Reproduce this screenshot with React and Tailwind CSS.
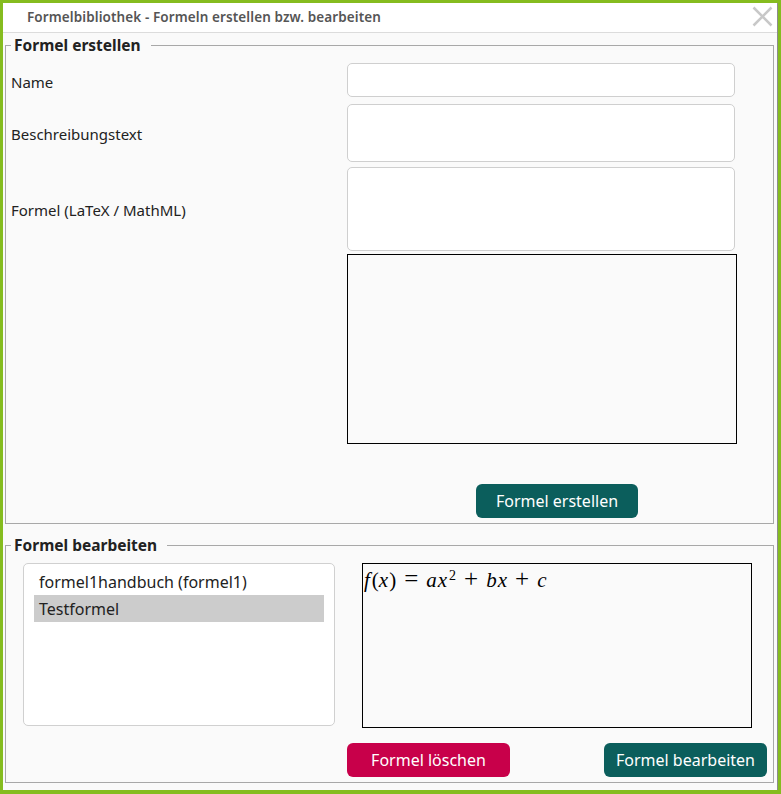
export default function App() {
  const font = { fontFamily: '"Noto Sans", "Open Sans", sans-serif' }
  const serif = { fontFamily: '"Liberation Serif", "DejaVu Serif", serif' }

  return (
    <div className="w-[781px] h-[794px] border-l-[3px] border-t-[3px] border-r-[3px] border-b-[4px] border-[#85bc1f] bg-[#fafafa] flex flex-col overflow-hidden" style={font}>
      <div className="flex-1 flex flex-col border-r border-[#8c8c8c]">
        {/* Titelleiste */}
        <div className="h-[30px] bg-white border-b border-[#dcdcdc] flex items-center justify-between pl-[24px] pr-[4px]">
          <span className="text-[13.5px] font-semibold text-[#555] tracking-[0.1px]">Formelbibliothek - Formeln erstellen bzw. bearbeiten</span>
          <svg width="21" height="21" viewBox="0 0 21 21" className="-mt-[3px]">
            <path d="M1.5 1.5 L19.5 19.5 M19.5 1.5 L1.5 19.5" stroke="#c8c8c8" strokeWidth="2.5" />
          </svg>
        </div>

        {/* Formel erstellen */}
        <fieldset className="mt-[2px] ml-[2px] mr-[3px] border border-[#a8a8a8] px-[5px] pb-[5px]">
          <legend className="text-[15.5px] leading-[20px] font-bold text-[#222] pl-[3px] pr-[10px]">Formel erstellen</legend>
          <div className="pt-[8px] grid grid-cols-[336px_1fr] text-[15px] text-[#222]">
            <label className="flex items-center h-[34px] pt-[5px]">Name</label>
            <input className="w-[388px] h-[34px] bg-white border border-[#cfcfcf] rounded-[5px] outline-none px-2" />

            <label className="flex items-center h-[58px] mt-[7px] pt-[2px]">Beschreibungstext</label>
            <textarea className="w-[388px] h-[58px] mt-[7px] bg-white border border-[#cfcfcf] rounded-[5px] outline-none resize-none px-2" />

            <label className="flex items-center h-[84px] mt-[5px] pt-[2px]">Formel (LaTeX / MathML)</label>
            <textarea className="w-[388px] h-[84px] mt-[5px] bg-white border border-[#cfcfcf] rounded-[5px] outline-none resize-none px-2" />

            <div />
            <div className="w-[390px] h-[190px] mt-[3px] border border-black bg-[#fafafa]" />

            <div />
            <div className="mt-[40px] pl-[129px]">
              <button className="w-[162px] h-[34px] rounded-[6px] bg-[#0b5e5c] text-white text-[16px]">Formel erstellen</button>
            </div>
          </div>
        </fieldset>

        {/* Formel bearbeiten */}
        <fieldset className="mt-[11px] ml-[2px] mr-[3px] border border-[#a8a8a8] pl-[5px] pr-[6px] pb-[5px]">
          <legend className="text-[15.5px] leading-[20px] font-bold text-[#222] pl-[3px] pr-[10px]">Formel bearbeiten</legend>
          <div className="pt-[8px] flex items-start">
            <div className="ml-[12px] w-[312px] h-[163px] bg-white border border-[#d0d0d0] rounded-[5px] px-[10px] pt-[4px] text-[16px] text-[#222]">
              <div className="h-[27px] flex items-center px-[5px]">formel1handbuch (formel1)</div>
              <div className="h-[27px] flex items-center px-[5px] bg-[#cccccc]">Testformel</div>
            </div>
            <div className="ml-[27px] w-[390px] h-[165px] border border-black bg-[#fafafa] pl-[1px] pt-[3px]">
              <div className="flex items-baseline text-[21px] leading-[26px] text-black" style={serif}>
                <i>f</i><span className="ml-[2px]">(</span><i>x</i><span className="ml-[1px]">)</span>
                <span className="mx-[8px] text-[25px] leading-[20px]">=</span>
                <i>a</i><i className="ml-[1px]">x</i><sup className="text-[14px] ml-[2px]">2</sup>
                <span className="mx-[8px] text-[25px] leading-[20px]">+</span>
                <i>b</i><i className="ml-[1px]">x</i>
                <span className="mx-[8px] text-[25px] leading-[20px]">+</span>
                <i>c</i>
              </div>
            </div>
          </div>
          <div className="mt-[15px] pl-[336px] flex justify-between">
            <button className="w-[163px] h-[34px] rounded-[6px] bg-[#c8004a] text-white text-[16px]">Formel löschen</button>
            <button className="w-[163px] h-[34px] rounded-[6px] bg-[#0b5e5c] text-white text-[16px]">Formel bearbeiten</button>
          </div>
        </fieldset>
      </div>
    </div>
  )
}
